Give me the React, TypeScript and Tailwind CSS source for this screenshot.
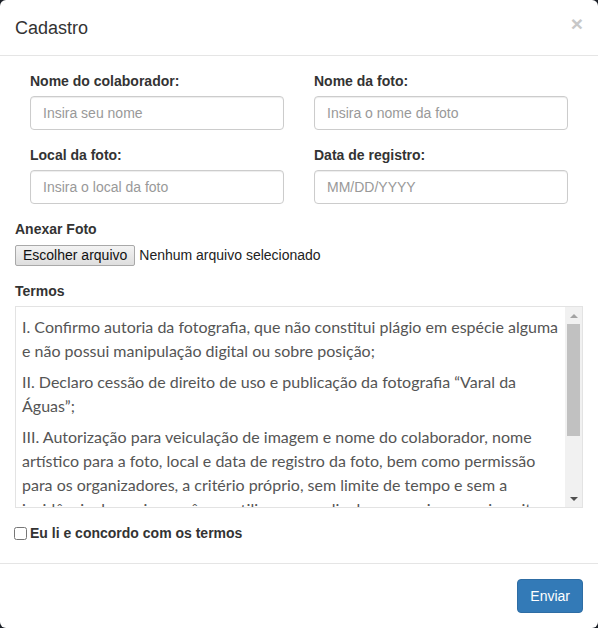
import React from "react";

const TERMS = [
  "I. Confirmo autoria da fotografia, que não constitui plágio em espécie alguma e não possui manipulação digital ou sobre posição;",
  "II. Declaro cessão de direito de uso e publicação da fotografia “Varal da Águas”;",
  "III. Autorização para veiculação de imagem e nome do colaborador, nome artístico para a foto, local e data de registro da foto, bem como permissão para os organizadores, a critério próprio, sem limite de tempo e sem a incidência de quaisquer ônus, utilizarem ou divulgarem as imagens inscritas no concurso.",
];

const SANS = "font-['Liberation_Sans',Arial,sans-serif]";

function Field({ label, placeholder }: { label: string; placeholder: string }) {
  return (
    <div className="flex flex-col">
      <label className="mb-[5px] h-5 text-[14px] font-bold leading-5 text-[#333]">{label}</label>
      <input
        type="text"
        placeholder={placeholder}
        className="h-[34px] w-full rounded-[4px] border border-[#ccc] bg-white px-3 text-[14px] text-[#555] shadow-[inset_0_1px_1px_rgba(0,0,0,0.075)] outline-none placeholder:text-[#999]"
      />
    </div>
  );
}

export default function App() {
  return (
    <div className={`h-[628px] w-[598px] bg-[#1b1f27] ${SANS}`}>
      <div className="flex h-full flex-col rounded-[6px] bg-white">
        <header className="flex h-[56px] items-center justify-between border-b border-[#e5e5e5] px-[15px]">
          <h4 className="text-[18px] leading-[20px] text-[#333]">Cadastro</h4>
          <button type="button" className="-mt-[9px] text-[21px] font-bold leading-none text-[#c8c8c8]">
            ×
          </button>
        </header>

        <div className="flex-1 p-[15px]">
          <div className="grid grid-cols-2 gap-x-[30px] gap-y-[15px] px-[15px]">
            <Field label="Nome do colaborador:" placeholder="Insira seu nome" />
            <Field label="Nome da foto:" placeholder="Insira o nome da foto" />
            <Field label="Local da foto:" placeholder="Insira o local da foto" />
            <Field label="Data de registro:" placeholder="MM/DD/YYYY" />
          </div>

          <div className="mt-[15px]">
            <label className="mb-[5px] block h-5 text-[14px] font-bold leading-5 text-[#333]">Anexar Foto</label>
            <div className="flex h-[22px] items-center text-[14px] text-[#222]">
              <button
                type="button"
                className="h-[21px] rounded-[2px] border border-[#a9a9a9] bg-[linear-gradient(#f3f3f3,#dedede)] px-[7px] text-[14px] leading-[19px] text-[#111]"
              >
                Escolher arquivo
              </button>
              <span className="ml-[4px]">Nenhum arquivo selecionado</span>
            </div>
          </div>

          <div className="mt-[15px]">
            <label className="mb-[5px] block h-5 text-[14px] font-bold leading-5 text-[#333]">Termos</label>
            <div className="flex h-[202px] border border-[#e3e3e3] bg-white">
              <div className="flex-1 overflow-hidden py-[8px] pl-[6px] pr-[5px] font-['Lato',sans-serif] text-[16px] leading-[24px] text-[#555]">
                {TERMS.map((t) => (
                  <p key={t} className="mb-[7px]">
                    {t}
                  </p>
                ))}
              </div>
              <div className="flex w-[17px] flex-col bg-[#f1f1f1]">
                <div className="flex h-[17px] items-center justify-center">
                  <div className="h-0 w-0 border-x-[4px] border-b-[4px] border-x-transparent border-b-[#a3a3a3]" />
                </div>
                <div className="mx-[2px] h-[112px] bg-[#c1c1c1]" />
                <div className="flex-1" />
                <div className="flex h-[17px] items-center justify-center">
                  <div className="h-0 w-0 border-x-[4px] border-t-[4px] border-x-transparent border-t-[#505050]" />
                </div>
              </div>
            </div>
          </div>

          <label className="mt-[15px] flex items-center gap-[3px] text-[14px] font-bold text-[#333]">
            <input type="checkbox" className="-ml-px h-[13px] w-[13px]" />
            <span>Eu li e concordo com os termos</span>
          </label>
        </div>

        <footer className="flex justify-end border-t border-[#e5e5e5] p-[15px]">
          <button
            type="button"
            className="h-[34px] rounded-[4px] border border-[#2e6da4] bg-[#337ab7] px-3 text-[14px] text-white"
          >
            Enviar
          </button>
        </footer>
      </div>
    </div>
  );
}
